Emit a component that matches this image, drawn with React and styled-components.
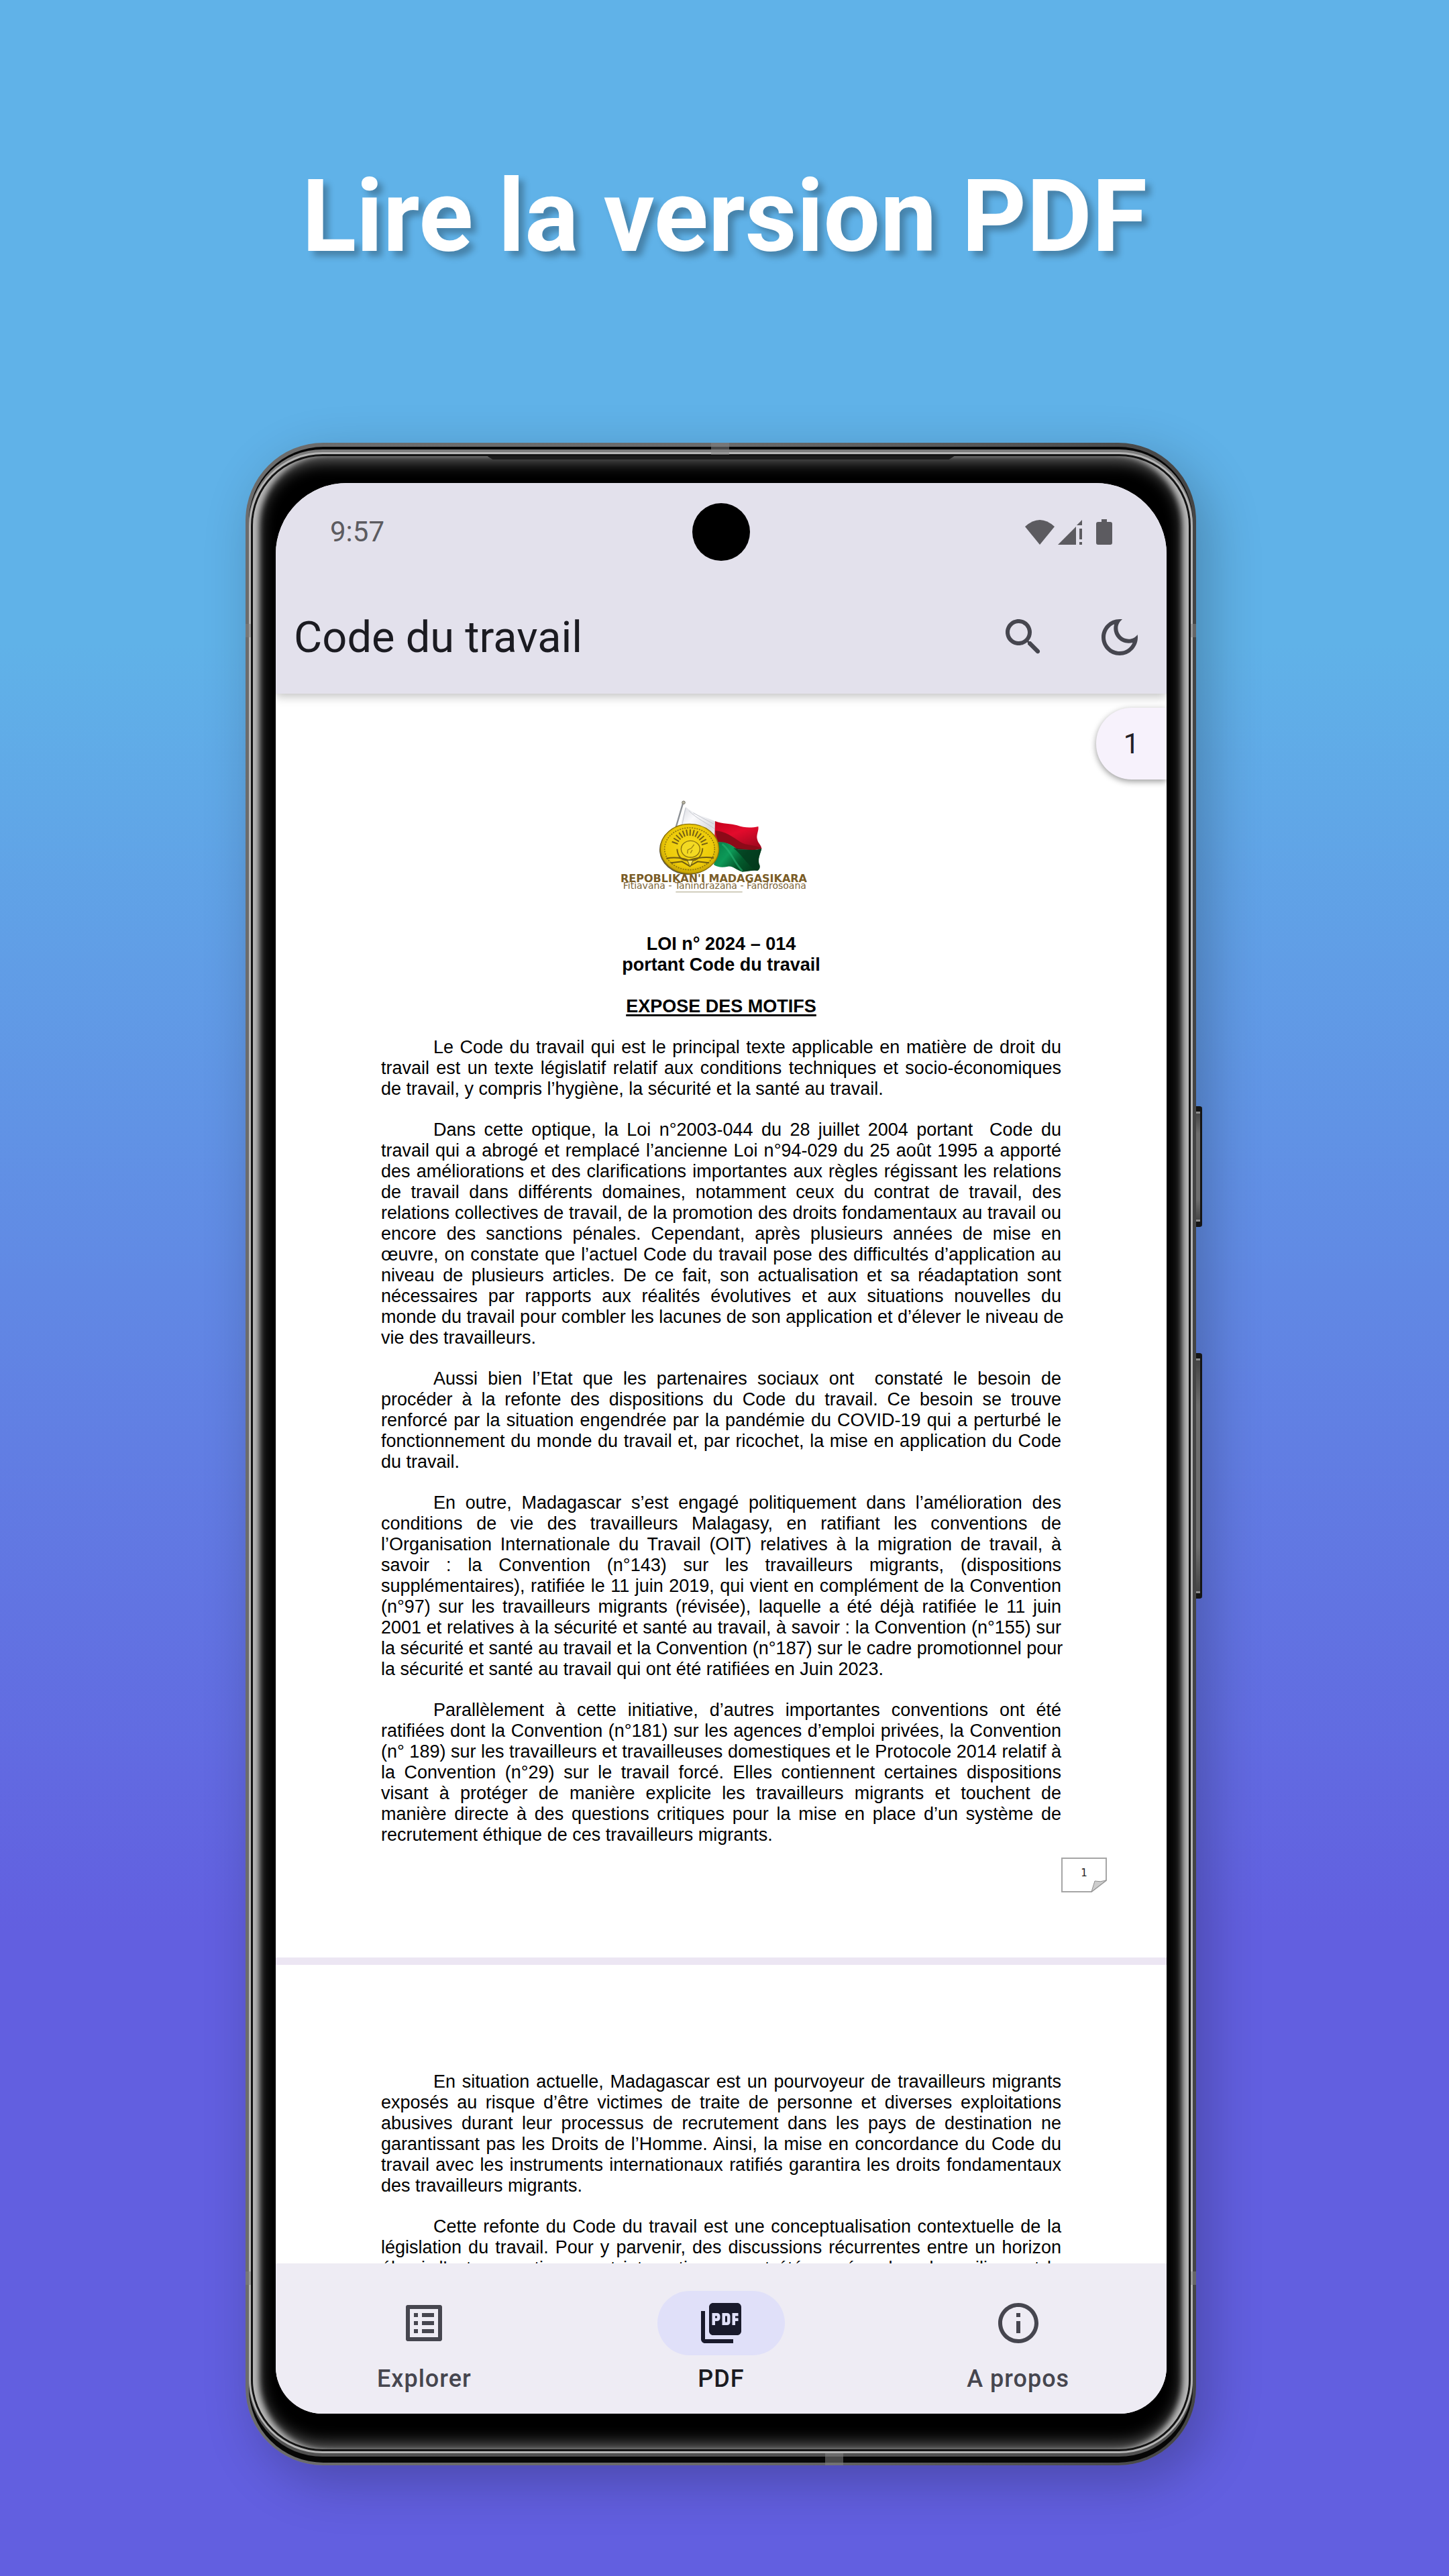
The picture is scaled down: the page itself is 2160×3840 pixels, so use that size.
import React from "react";
import styled, { createGlobalStyle } from "styled-components";
import { MdListAlt, MdPictureAsPdf, MdInfoOutline } from "react-icons/md";

const GlobalStyle = createGlobalStyle`
  *, *::before, *::after { box-sizing: border-box; }
  body {
    margin: 0;
    font-family: Roboto, "Liberation Sans", sans-serif;
  }
`;

const Poster = styled.main`
  display: flex;
  flex-direction: column;
  align-items: center;
  gap: 249px;
  min-height: 100vh;
  padding: 235px 40px 165px;
  overflow: hidden;
  background: linear-gradient(180deg, #60b2e8 25%, #625fe0 75%);
`;

const Headline = styled.h1`
  margin: 0;
  color: #fff;
  font-size: 150px;
  font-weight: 700;
  line-height: 176px;
  text-align: center;
  text-shadow: 8px 8px 10px rgba(0, 0, 0, 0.27);
`;

/* ---------- device ---------- */

const Device = styled.div`
  display: flex;
  width: 100%;
  max-width: 1428px;
`;

const Frame = styled.div`
  position: relative;
  flex: 1;
  min-width: 0;
  padding: 6px 5px 4px;
  border-radius: 116px;
  background: linear-gradient(90deg, #6c6c6c, #6a6a6a 50%, #454545);
  box-shadow: 18px 24px 80px rgba(0, 0, 0, 0.24);
`;

const Groove = styled.div`
  padding: 4px 0 9px;
  border-radius: 111px;
  background: #060606;
`;

const Rail = styled.div`
  padding: 4px 0 5px;
  border-radius: 110px;
  background: linear-gradient(180deg, #7c7c7c, #8a8a8a 50%, #505050);
`;

const Lip = styled.div`
  padding: 3px;
  border-radius: 110px;
  background: #b4b4b4;
`;

const Seam = styled.div`
  padding: 3px;
  border-radius: 107px;
  background: #141414;
`;

const Glass = styled.div`
  position: relative;
  padding: 40px 33px 53px 34px;
  border-radius: 104px;
  background: #000;
  box-shadow:
    inset 13px 0 8px -4px #b8b8b8,
    inset -13px 0 8px -4px #b8b8b8,
    inset 0 0 26px 5px #7d7d7d;
`;

const Speaker = styled.div`
  position: absolute;
  top: 0;
  left: 50%;
  width: 696px;
  height: 5px;
  margin-left: -348px;
  background: #1c1c1c;
  clip-path: polygon(0 0, 100% 0, 688px 100%, 8px 100%);
`;

const Antenna = styled.span`
  position: absolute;
  background: rgba(130, 130, 130, 0.55);
  ${({ $edge, $at }) =>
    $edge === "top" || $edge === "bottom"
      ? `${$edge}: 0; left: ${$at}; width: 27px; height: 18px;`
      : `${$edge}: 0; top: ${$at}; width: 8px; height: 20px;`}
`;

const SideKeys = styled.div`
  display: flex;
  flex-direction: column;
  gap: 188px;
  width: 11px;
  padding: 989px 2px 0 0;
`;

const SideKey = styled.div`
  position: relative;
  height: ${({ $long }) => ($long ? 366 : 180)}px;
  border: solid #151515;
  border-width: 8px 3px 8px 0;
  border-radius: 0 4px 4px 0;
  background: linear-gradient(180deg, #444, #6e6e6e 20%, #6e6e6e 80%, #444);
  box-shadow: inset 0 3px 0 #8c8c8c, inset 0 -3px 0 #8c8c8c;
`;

/* ---------- app ---------- */

const Screen = styled.div`
  display: flex;
  flex-direction: column;
  aspect-ratio: 664 / 1439;
  overflow: hidden;
  border-radius: 106px 106px 70px 70px;
  background: #fff;
`;

const Header = styled.header`
  position: relative;
  z-index: 1;
  background: #e3e1ec;
  box-shadow: 0 4px 14px rgba(0, 0, 0, 0.25);
`;

const StatusBar = styled.div`
  display: grid;
  grid-template-columns: 1fr auto 1fr;
  align-items: center;
  height: 146px;
  padding: 0 81px;
  color: #5c5b60;
`;

const Clock = styled.time`
  font-size: 42px;
  line-height: 48px;
`;

const Camera = styled.div`
  width: 86px;
  height: 86px;
  border-radius: 50%;
  background: #000;
`;

const StatusIcons = styled.svg`
  justify-self: end;
  width: 130px;
  height: 38px;
`;

const AppBar = styled.div`
  display: flex;
  align-items: center;
  height: 168px;
  padding-left: 27px;
`;

const AppTitle = styled.h2`
  flex: 1;
  margin: 0;
  color: #1b1b21;
  font-size: 65px;
  font-weight: 400;
  line-height: 84px;
`;

const Actions = styled.div`
  display: flex;
  gap: 3px;
`;

const IconButton = styled.button`
  display: grid;
  place-items: center;
  width: 140px;
  height: 140px;
  padding: 0;
  border: 0;
  border-radius: 50%;
  background: none;
  color: #46464f;

  svg {
    width: 72px;
    height: 72px;
    fill: currentColor;
  }
`;

const Viewer = styled.section`
  position: relative;
  flex: 1;
  min-height: 0;
  overflow: hidden;
  background: #ece6f3;
`;

const PageBadge = styled.div`
  position: absolute;
  top: 21px;
  right: 0;
  display: grid;
  place-items: center;
  width: 105px;
  height: 107px;
  border-radius: 53px 0 0 53px;
  background: #f7f2fc;
  box-shadow: 0 3px 10px rgba(0, 0, 0, 0.4);
  color: #222126;
  font-size: 42px;
  line-height: 48px;
`;

const Sheet = styled.article`
  margin-bottom: 11px;
  padding: ${({ $first }) => ($first ? 156 : 159)}px 0 97px;
  background: #fff;
  color: #000;
  font-family: "Liberation Sans", Arial, sans-serif;
  font-size: 27px;
  line-height: 31px;
`;

const SheetBody = styled.div`
  padding: 0 157px;
`;

const Emblem = styled.svg`
  display: block;
  width: 320px;
  height: 145px;
  margin: 0 auto 57px;
`;

const LawTitle = styled.h3`
  margin: 0 0 31px;
  font-size: 27px;
  font-weight: 700;
  text-align: center;
`;

const SectionTitle = styled(LawTitle)`
  margin-bottom: 30px;
  text-decoration: underline;
  text-decoration-thickness: 3px;
  text-underline-offset: 3px;
`;

const Paragraph = styled.p`
  margin: 0 0 30px;
  text-indent: 78px;

  &:last-child {
    margin-bottom: 0;
  }
`;

const Line = styled.span`
  display: block;
  text-align: justify;
  text-align-last: justify;
  white-space: nowrap;

  & + & {
    text-indent: 0;
  }

  &:last-child {
    text-align-last: left;
  }
`;

const SheetFooter = styled.footer`
  display: flex;
  justify-content: flex-end;
  margin-top: 18px;
  padding-right: 89px;
`;

const FoldedNote = styled.svg`
  display: block;
  width: 68px;
  height: 52px;
`;

const NavBar = styled.nav`
  display: flex;
  height: 224px;
  padding-top: 41px;
  background: #eeecf4;
`;

const NavItem = styled.a`
  display: flex;
  flex: 1;
  flex-direction: column;
  align-items: center;
  gap: 14px;
  color: ${({ $active }) => ($active ? "#1b1b21" : "#46464f")};
  font-size: 36px;
  font-weight: 500;
  letter-spacing: 1px;
  line-height: 42px;
  text-decoration: none;
`;

const Pill = styled.span`
  display: grid;
  place-items: center;
  width: 190px;
  height: 96px;
  border-radius: 48px;
  background: ${({ $active }) => ($active ? "#e0e0f9" : "transparent")};
  color: ${({ $active }) => ($active ? "#191a2c" : "#46464f")};
  font-size: 72px;

  svg {
    display: block;
  }
`;

const introParagraphs = [
  `Le Code du travail qui est le principal texte applicable en matière de droit du
travail est un texte législatif relatif aux conditions techniques et socio-économiques
de travail, y compris l’hygiène, la sécurité et la santé au travail.`,
  `Dans cette optique, la Loi n°2003-044 du 28 juillet 2004 portant\u00a0 Code du
travail qui a abrogé et remplacé l’ancienne Loi n°94-029 du 25 août 1995 a apporté
des améliorations et des clarifications importantes aux règles régissant les relations
de travail dans différents domaines, notamment ceux du contrat de travail, des
relations collectives de travail, de la promotion des droits fondamentaux au travail ou
encore des sanctions pénales. Cependant, après plusieurs années de mise en
œuvre, on constate que l’actuel Code du travail pose des difficultés d’application au
niveau de plusieurs articles. De ce fait, son actualisation et sa réadaptation sont
nécessaires par rapports aux réalités évolutives et aux situations nouvelles du
monde du travail pour combler les lacunes de son application et d’élever le niveau de
vie des travailleurs.`,
  `Aussi bien l’Etat que les partenaires sociaux ont\u00a0 constaté le besoin de
procéder à la refonte des dispositions du Code du travail. Ce besoin se trouve
renforcé par la situation engendrée par la pandémie du COVID-19 qui a perturbé le
fonctionnement du monde du travail et, par ricochet, la mise en application du Code
du travail.`,
  `En outre, Madagascar s’est engagé politiquement dans l’amélioration des
conditions de vie des travailleurs Malagasy, en ratifiant les conventions de
l’Organisation Internationale du Travail (OIT) relatives à la migration de travail, à
savoir : la Convention (n°143) sur les travailleurs migrants, (dispositions
supplémentaires), ratifiée le 11 juin 2019, qui vient en complément de la Convention
(n°97) sur les travailleurs migrants (révisée), laquelle a été déjà ratifiée le 11 juin
2001 et relatives à la sécurité et santé au travail, à savoir : la Convention (n°155) sur
la sécurité et santé au travail et la Convention (n°187) sur le cadre promotionnel pour
la sécurité et santé au travail qui ont été ratifiées en Juin 2023.`,
  `Parallèlement à cette initiative, d’autres importantes conventions ont été
ratifiées dont la Convention (n°181) sur les agences d’emploi privées, la Convention
(n° 189) sur les travailleurs et travailleuses domestiques et le Protocole 2014 relatif à
la Convention (n°29) sur le travail forcé. Elles contiennent certaines dispositions
visant à protéger de manière explicite les travailleurs migrants et touchent de
manière directe à des questions critiques pour la mise en place d’un système de
recrutement éthique de ces travailleurs migrants.`,
];

const nextParagraphs = [
  `En situation actuelle, Madagascar est un pourvoyeur de travailleurs migrants
exposés au risque d’être victimes de traite de personne et diverses exploitations
abusives durant leur processus de recrutement dans les pays de destination ne
garantissant pas les Droits de l’Homme. Ainsi, la mise en concordance du Code du
travail avec les instruments internationaux ratifiés garantira les droits fondamentaux
des travailleurs migrants.`,
  `Cette refonte du Code du travail est une conceptualisation contextuelle de la
législation du travail. Pour y parvenir, des discussions récurrentes entre un horizon
élargi d’acteurs nationaux et internationaux ont été menées dans les milieux et la
société.`,
];

const rays = [-70, -58, -46, -34, -22, -10, 2, 14, 26, 38, 50, 62, 74];

function TextBlock({ text }) {
  return (
    <Paragraph>
      {text.split("\n").map((line) => (
        <Line key={line}>{line}</Line>
      ))}
    </Paragraph>
  );
}

function NationalEmblem() {
  return (
    <Emblem viewBox="165 95 960 435" role="img" aria-label="Repoblikan'i Madagasikara">
      <defs>
        <linearGradient id="white-cloth" x1="0" y1="0" x2="1" y2="1">
          <stop offset="0" stopColor="#d4d6dc" />
          <stop offset="0.35" stopColor="#fbfbfd" />
          <stop offset="0.7" stopColor="#dcdde2" />
          <stop offset="1" stopColor="#f4f4f6" />
        </linearGradient>
        <linearGradient id="red-cloth" x1="0" y1="0" x2="0.6" y2="1">
          <stop offset="0" stopColor="#c4001c" />
          <stop offset="0.5" stopColor="#e30b2c" />
          <stop offset="1" stopColor="#a80820" />
        </linearGradient>
        <linearGradient id="green-cloth" x1="0" y1="0" x2="1" y2="0.5">
          <stop offset="0" stopColor="#067a45" />
          <stop offset="0.4" stopColor="#0d9a58" />
          <stop offset="0.7" stopColor="#035a2c" />
          <stop offset="1" stopColor="#02401e" />
        </linearGradient>
        <radialGradient id="gold" cx="0.5" cy="0.45" r="0.6">
          <stop offset="0" stopColor="#f6dc1c" />
          <stop offset="0.7" stopColor="#ecc908" />
          <stop offset="1" stopColor="#b28f04" />
        </radialGradient>
      </defs>
      <path d="M474 118 443 224" stroke="#8b8f94" strokeWidth="7" />
      <circle cx="477" cy="114" r="7" fill="#b9b6a4" stroke="#77746a" strokeWidth="3" />
      <path d="M486 134C530 170 570 176 618 198V262L600 300 455 240Z" fill="url(#white-cloth)" />
      <path d="M486 138 470 216M500 150C540 190 580 204 616 232M520 160 612 210" stroke="#c3c6cd" strokeWidth="3" fill="none" />
      <path d="M618 197C650 210 690 208 716 216 750 228 780 228 811 221 815 240 800 258 807 280 810 296 824 302 826 320 790 330 760 322 720 324 690 300 660 290 630 292L616 262Z" fill="url(#red-cloth)" />
      <path d="M618 240C660 240 700 270 730 290 760 310 800 300 826 320 790 332 760 322 715 324 690 300 660 290 630 292Z" fill="#8c0a18" />
      <path d="M632 292C670 286 700 312 722 326 760 322 790 332 826 320 818 350 806 370 818 396 820 408 814 416 808 419 780 416 760 424 740 424 710 416 700 396 675 400 650 406 630 404 612 392Z" fill="url(#green-cloth)" />
      <path d="M700 318C740 350 760 390 800 418 812 420 820 408 816 396 806 370 818 350 826 320 790 332 740 322 700 318Z" fill="#04391d" opacity="0.75" />
      <path d="M650 300C690 330 700 380 740 420" stroke="#27b473" strokeWidth="8" fill="none" opacity="0.6" />
      <ellipse cx="499" cy="325" rx="130" ry="112" fill="#5d5640" />
      <ellipse cx="504" cy="321" rx="131" ry="111" fill="url(#gold)" stroke="#8f7404" strokeWidth="4" />
      <ellipse cx="504" cy="321" rx="112" ry="94" fill="none" stroke="#8d7510" strokeWidth="5" strokeDasharray="6 5" />
      {rays.map((angle) => (
        <path
          key={angle}
          d="M504 262V234"
          stroke="#766013"
          strokeWidth="6"
          transform={`rotate(${angle} 504 318)`}
        />
      ))}
      <ellipse cx="508" cy="322" rx="42" ry="37" fill="#f3da22" stroke="#8a7210" strokeWidth="4" />
      <path d="M524 302 512 318 496 326 494 342M516 326 508 340" stroke="#9b8213" strokeWidth="4" fill="none" />
      <path d="M448 322C452 366 476 374 506 374 538 374 560 356 562 318" stroke="#7d660f" strokeWidth="6" fill="none" />
      <path d="M400 364C440 356 470 362 500 372 540 360 580 356 612 362M420 384 470 378 504 398 540 378 590 384" stroke="#6f5b12" strokeWidth="6" fill="none" />
      <path d="M494 372 506 402 520 372Z" fill="#f6e560" stroke="#6f5b12" strokeWidth="3" />
      <g fontFamily="DejaVu Sans, sans-serif">
        <text x="612" y="469" fontSize="48" fontWeight="700" textAnchor="middle" fill="#7a5c26">
          REPOBLIKAN'I MADAGASIKARA
        </text>
        <text x="616" y="500" fontSize="42" textAnchor="middle" fill="#7d6538">
          Fitiavana - Tanindrazana - Fandrosoana
        </text>
      </g>
      <path d="M442 514H740" stroke="#b9b39a" strokeWidth="4" />
    </Emblem>
  );
}

function PageNote({ number }) {
  return (
    <FoldedNote viewBox="0 0 68 52">
      <path d="M1 1H67V34L45 51H1Z" fill="#fff" stroke="#a6a6a6" strokeWidth="2" />
      <path d="M45 51 50 35Q58 37 67 34Z" fill="#cdcdcd" stroke="#8f8f8f" strokeWidth="1" />
      <text x="34" y="28" fontFamily="DejaVu Sans, sans-serif" fontSize="15" textAnchor="middle" fill="#222">
        {number}
      </text>
    </FoldedNote>
  );
}

function SystemIcons() {
  return (
    <StatusIcons viewBox="0 0 130 38" fill="currentColor" aria-hidden="true">
      <path d="M0 11Q22-9 44 11L22 38Z" />
      <path d="M49 38 76 11V38ZM77 9 85 1V9ZM81 14H85V30H81ZM81 34H85V38H81Z" />
      <path d="M114 0H122V4H127Q130 4 130 7V35Q130 38 127 38H109Q106 38 106 35V7Q106 4 109 4H114Z" />
    </StatusIcons>
  );
}

const tabs = [
  { label: "Explorer", Icon: MdListAlt },
  { label: "PDF", Icon: MdPictureAsPdf, active: true },
  { label: "A propos", Icon: MdInfoOutline },
];

export default function App() {
  return (
    <>
      <GlobalStyle />
      <Poster>
        <Headline>Lire la version PDF</Headline>
        <Device>
          <Frame>
            <Groove>
              <Rail>
                <Lip>
                  <Seam>
                    <Glass>
                      <Speaker />
                      <Screen>
                        <Header>
                          <StatusBar>
                            <Clock>9:57</Clock>
                            <Camera />
                            <SystemIcons />
                          </StatusBar>
                          <AppBar>
                            <AppTitle>Code du travail</AppTitle>
                            <Actions>
                              <IconButton type="button" aria-label="Rechercher">
                                <svg viewBox="0 0 24 24">
                                  <path d="M15.5 14h-.79l-.28-.27c1.2-1.4 1.82-3.31 1.48-5.34-.47-2.78-2.79-5-5.59-5.34-4.23-.52-7.79 3.04-7.27 7.27.34 2.8 2.56 5.12 5.34 5.59 2.03.34 3.94-.28 5.34-1.48l.27.28v.79l4.25 4.25c.41.41 1.08.41 1.49 0 .41-.41.41-1.08 0-1.49L15.5 14zm-6 0C7.01 14 5 11.99 5 9.5S7.01 5 9.5 5 14 7.01 14 9.5 11.99 14 9.5 14z" />
                                </svg>
                              </IconButton>
                              <IconButton type="button" aria-label="Mode sombre">
                                <svg viewBox="0 0 24 24">
                                  <path d="M9.37 5.51c-.18.64-.27 1.31-.27 1.99 0 4.08 3.32 7.4 7.4 7.4.68 0 1.35-.09 1.99-.27C17.45 17.19 14.93 19 12 19c-3.86 0-7-3.14-7-7 0-2.93 1.81-5.45 4.37-6.49zM12 3c-4.97 0-9 4.03-9 9s4.03 9 9 9 9-4.03 9-9c0-.46-.04-.92-.1-1.36-.98 1.37-2.58 2.26-4.4 2.26-2.98 0-5.4-2.42-5.4-5.4 0-1.81.89-3.42 2.26-4.4C12.92 3.04 12.46 3 12 3z" />
                                </svg>
                              </IconButton>
                            </Actions>
                          </AppBar>
                        </Header>
                        <Viewer>
                          <Sheet $first>
                            <SheetBody>
                              <NationalEmblem />
                              <LawTitle>
                                LOI n° 2024 – 014
                                <br />
                                portant Code du travail
                              </LawTitle>
                              <SectionTitle as="h4">EXPOSE DES MOTIFS</SectionTitle>
                              {introParagraphs.map((text) => (
                                <TextBlock key={text} text={text} />
                              ))}
                            </SheetBody>
                            <SheetFooter>
                              <PageNote number={1} />
                            </SheetFooter>
                          </Sheet>
                          <Sheet>
                            <SheetBody>
                              {nextParagraphs.map((text) => (
                                <TextBlock key={text} text={text} />
                              ))}
                            </SheetBody>
                          </Sheet>
                          <PageBadge>1</PageBadge>
                        </Viewer>
                        <NavBar>
                          {tabs.map(({ label, Icon, active }) => (
                            <NavItem key={label} href="#" $active={active}>
                              <Pill $active={active}>
                                <Icon aria-hidden="true" />
                              </Pill>
                              {label}
                            </NavItem>
                          ))}
                        </NavBar>
                      </Screen>
                    </Glass>
                  </Seam>
                </Lip>
              </Rail>
            </Groove>
            <Antenna $edge="top" $at="49%" />
            <Antenna $edge="bottom" $at="61%" />
            <Antenna $edge="left" $at="270px" />
            <Antenna $edge="right" $at="270px" />
            <Antenna $edge="left" $at="2726px" />
            <Antenna $edge="right" $at="2726px" />
          </Frame>
          <SideKeys>
            <SideKey />
            <SideKey $long />
          </SideKeys>
        </Device>
      </Poster>
    </>
  );
}
